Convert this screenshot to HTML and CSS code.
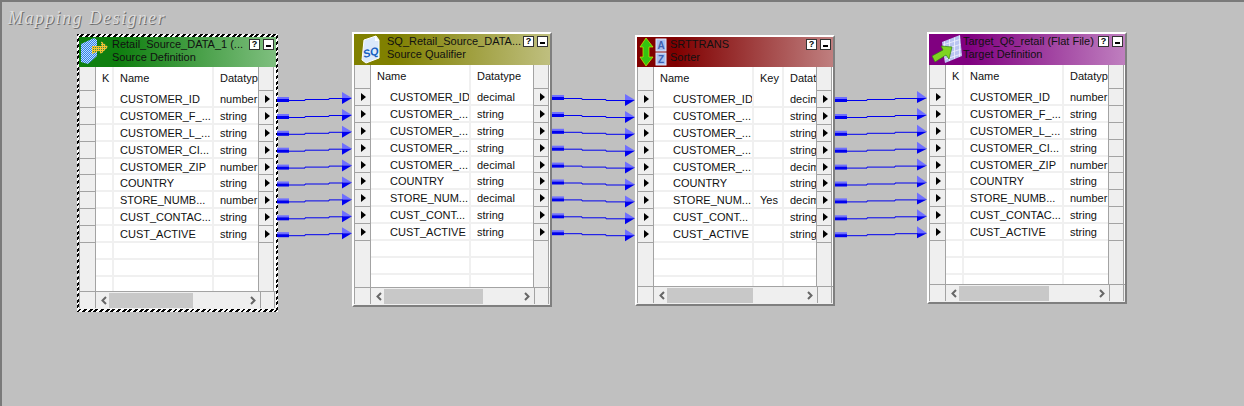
FILE: index.html
```html
<!DOCTYPE html>
<html lang="en">
<head>
    <meta charset="UTF-8">
    <title>Mapping Designer</title>
    <link rel="stylesheet" href="styles.css">
</head>
<body>
<div class="canvas">
    <div class="heading">Mapping Designer</div>

    <!-- Source definition -->
    <div class="win win-source">
        <div class="inner">
            <div class="title title-green">
                <svg class="icon" width="33" height="30" viewBox="0 0 33 30">
                    <defs>
                        <pattern id="blueCheck" width="2" height="2" patternUnits="userSpaceOnUse">
                            <rect width="2" height="2" fill="#2f7fe8"/>
                            <rect width="1" height="1" fill="#bfe0ff"/>
                            <rect x="1" y="1" width="1" height="1" fill="#bfe0ff"/>
                        </pattern>
                        <pattern id="yellowCheck" width="2" height="2" patternUnits="userSpaceOnUse">
                            <rect width="2" height="2" fill="#f4c430"/>
                            <rect width="1" height="1" fill="#3d8a4a"/>
                        </pattern>
                    </defs>
                    <polygon points="2,7 15,1 18,3 18,19 9,27 2,25" fill="url(#blueCheck)"/>
                    <polygon points="13,9 22,9 22,4 29,10 22,17 20,14 13,17" fill="url(#yellowCheck)"/>
                </svg>
                <div class="caption">
                    <div>Retail_Source_DATA_1 (...</div>
                    <div>Source Definition</div>
                </div>
                <div class="btns"><span class="btn">?</span><span class="btn btn-min"></span></div>
            </div>
            <div class="grid">
                <div class="row head"><div class="port"></div><div class="cell">K</div><div class="cell">Name</div><div class="cell">Datatype</div><div class="port"></div></div>
                <div class="row"><div class="port"></div><div class="cell"></div><div class="cell">CUSTOMER_ID</div><div class="cell">number</div><div class="port out"></div></div>
                <div class="row"><div class="port"></div><div class="cell"></div><div class="cell">CUSTOMER_F_...</div><div class="cell">string</div><div class="port out"></div></div>
                <div class="row"><div class="port"></div><div class="cell"></div><div class="cell">CUSTOMER_L_...</div><div class="cell">string</div><div class="port out"></div></div>
                <div class="row"><div class="port"></div><div class="cell"></div><div class="cell">CUSTOMER_CI...</div><div class="cell">string</div><div class="port out"></div></div>
                <div class="row"><div class="port"></div><div class="cell"></div><div class="cell">CUSTOMER_ZIP</div><div class="cell">number</div><div class="port out"></div></div>
                <div class="row"><div class="port"></div><div class="cell"></div><div class="cell">COUNTRY</div><div class="cell">string</div><div class="port out"></div></div>
                <div class="row"><div class="port"></div><div class="cell"></div><div class="cell">STORE_NUMB...</div><div class="cell">number</div><div class="port out"></div></div>
                <div class="row"><div class="port"></div><div class="cell"></div><div class="cell">CUST_CONTAC...</div><div class="cell">string</div><div class="port out"></div></div>
                <div class="row"><div class="port"></div><div class="cell"></div><div class="cell">CUST_ACTIVE</div><div class="cell">string</div><div class="port out"></div></div>
                <div class="row"><div class="port blank"></div><div class="cell"></div><div class="cell"></div><div class="cell"></div><div class="port blank"></div></div>
                <div class="row"><div class="port blank"></div><div class="cell"></div><div class="cell"></div><div class="cell"></div><div class="port blank"></div></div>
                <div class="row"><div class="port blank"></div><div class="cell"></div><div class="cell"></div><div class="cell"></div><div class="port blank"></div></div>
            </div>
            <div class="scroll">
                <div class="foot"></div>
                <div class="track"><svg class="chev" width="8" height="9" viewBox="0 0 8 9"><path d="M6 1 2.5 4.5 6 8" /></svg><div class="thumb"></div><svg class="chev chev-r" width="8" height="9" viewBox="0 0 8 9"><path d="M2 1 5.500 4.500 2 8" /></svg></div>
                <div class="foot"></div>
            </div>
        </div>
    </div>

    <!-- Source qualifier -->
    <div class="win win-qualifier">
        <div class="inner">
            <div class="title title-olive">
                <svg class="icon" width="33" height="31" viewBox="0 0 33 31">
                    <path d="M10 6 22 2 25 6V24L12 29 8 26Z" fill="#dbe9fb" stroke="#fff"/>
                    <path d="M21 2V7H25Z" fill="#fff"/>
                    <text x="10" y="24" class="icon-sq" transform="rotate(-14 10 24)">SQ</text>
                </svg>
                <div class="caption">
                    <div>SQ_Retail_Source_DATA...</div>
                    <div>Source Qualifier</div>
                </div>
                <div class="btns"><span class="btn">?</span><span class="btn btn-min"></span></div>
            </div>
            <div class="grid">
                <div class="row head"><div class="port"></div><div class="cell">Name</div><div class="cell">Datatype</div><div class="port"></div></div>
                <div class="row"><div class="port in"></div><div class="cell indent">CUSTOMER_ID</div><div class="cell">decimal</div><div class="port out"></div></div>
                <div class="row"><div class="port in"></div><div class="cell indent">CUSTOMER_...</div><div class="cell">string</div><div class="port out"></div></div>
                <div class="row"><div class="port in"></div><div class="cell indent">CUSTOMER_...</div><div class="cell">string</div><div class="port out"></div></div>
                <div class="row"><div class="port in"></div><div class="cell indent">CUSTOMER_...</div><div class="cell">string</div><div class="port out"></div></div>
                <div class="row"><div class="port in"></div><div class="cell indent">CUSTOMER_...</div><div class="cell">decimal</div><div class="port out"></div></div>
                <div class="row"><div class="port in"></div><div class="cell indent">COUNTRY</div><div class="cell">string</div><div class="port out"></div></div>
                <div class="row"><div class="port in"></div><div class="cell indent">STORE_NUM...</div><div class="cell">decimal</div><div class="port out"></div></div>
                <div class="row"><div class="port in"></div><div class="cell indent">CUST_CONT...</div><div class="cell">string</div><div class="port out"></div></div>
                <div class="row"><div class="port in"></div><div class="cell indent">CUST_ACTIVE</div><div class="cell">string</div><div class="port out"></div></div>
                <div class="row"><div class="port blank"></div><div class="cell"></div><div class="cell"></div><div class="port blank"></div></div>
                <div class="row"><div class="port blank"></div><div class="cell"></div><div class="cell"></div><div class="port blank"></div></div>
                <div class="row"><div class="port blank"></div><div class="cell"></div><div class="cell"></div><div class="port blank"></div></div>
            </div>
            <div class="scroll">
                <div class="foot"></div>
                <div class="track"><svg class="chev" width="8" height="9" viewBox="0 0 8 9"><path d="M6 1 2.5 4.5 6 8" /></svg><div class="thumb"></div><svg class="chev chev-r" width="8" height="9" viewBox="0 0 8 9"><path d="M2 1 5.500 4.500 2 8" /></svg></div>
                <div class="foot"></div>
            </div>
        </div>
    </div>

    <!-- Sorter -->
    <div class="win win-sorter">
        <div class="inner">
            <div class="title title-maroon">
                <svg class="icon" width="33" height="30" viewBox="0 0 33 30">
                    <path d="M9 1 16 10H12V20H16L9 29 3 20H6V10H3Z" fill="#35c410" stroke="#c8f000" stroke-width=".7"/>
                    <rect x="19" y="2" width="10" height="12" fill="#a9bff0" stroke="#e4ebff"/>
                    <rect x="19" y="16" width="10" height="12" fill="#a9bff0" stroke="#e4ebff"/>
                    <text x="24" y="12" class="icon-az">A</text>
                    <text x="24" y="26" class="icon-az">Z</text>
                </svg>
                <div class="caption">
                    <div>SRTTRANS</div>
                    <div>Sorter</div>
                </div>
                <div class="btns"><span class="btn">?</span><span class="btn btn-min"></span></div>
            </div>
            <div class="grid">
                <div class="row head"><div class="port"></div><div class="cell">Name</div><div class="cell">Key</div><div class="cell">Datatype</div><div class="port"></div></div>
                <div class="row"><div class="port in"></div><div class="cell indent">CUSTOMER_ID</div><div class="cell"></div><div class="cell">decimal</div><div class="port out"></div></div>
                <div class="row"><div class="port in"></div><div class="cell indent">CUSTOMER_...</div><div class="cell"></div><div class="cell">string</div><div class="port out"></div></div>
                <div class="row"><div class="port in"></div><div class="cell indent">CUSTOMER_...</div><div class="cell"></div><div class="cell">string</div><div class="port out"></div></div>
                <div class="row"><div class="port in"></div><div class="cell indent">CUSTOMER_...</div><div class="cell"></div><div class="cell">string</div><div class="port out"></div></div>
                <div class="row"><div class="port in"></div><div class="cell indent">CUSTOMER_...</div><div class="cell"></div><div class="cell">decimal</div><div class="port out"></div></div>
                <div class="row"><div class="port in"></div><div class="cell indent">COUNTRY</div><div class="cell"></div><div class="cell">string</div><div class="port out"></div></div>
                <div class="row"><div class="port in"></div><div class="cell indent">STORE_NUM...</div><div class="cell">Yes</div><div class="cell">decimal</div><div class="port out"></div></div>
                <div class="row"><div class="port in"></div><div class="cell indent">CUST_CONT...</div><div class="cell"></div><div class="cell">string</div><div class="port out"></div></div>
                <div class="row"><div class="port in"></div><div class="cell indent">CUST_ACTIVE</div><div class="cell"></div><div class="cell">string</div><div class="port out"></div></div>
                <div class="row"><div class="port blank"></div><div class="cell"></div><div class="cell"></div><div class="cell"></div><div class="port blank"></div></div>
                <div class="row"><div class="port blank"></div><div class="cell"></div><div class="cell"></div><div class="cell"></div><div class="port blank"></div></div>
                <div class="row"><div class="port blank"></div><div class="cell"></div><div class="cell"></div><div class="cell"></div><div class="port blank"></div></div>
            </div>
            <div class="scroll">
                <div class="foot"></div>
                <div class="track"><svg class="chev" width="8" height="9" viewBox="0 0 8 9"><path d="M6 1 2.5 4.5 6 8" /></svg><div class="thumb"></div><svg class="chev chev-r" width="8" height="9" viewBox="0 0 8 9"><path d="M2 1 5.500 4.500 2 8" /></svg></div>
                <div class="foot"></div>
            </div>
        </div>
    </div>

    <!-- Target definition -->
    <div class="win win-target">
        <div class="inner">
            <div class="title title-purple">
                <svg class="icon" width="34" height="31" viewBox="0 0 34 31">
                    <defs>
                        <pattern id="sheet" width="5" height="5" patternUnits="userSpaceOnUse" patternTransform="skewY(-18)">
                            <rect width="5" height="5" fill="#b9c4f2"/>
                            <path d="M0 0H5M0 0V5" stroke="#f2f4ff" stroke-width="1.400"/>
                        </pattern>
                    </defs>
                    <polygon points="13,8 31,1 33,22 16,29" fill="url(#sheet)"/>
                    <polygon points="3,22 14,16 12,12 23,13 20,25 17,21 6,28" fill="#7ed321" stroke="#2f7f10" stroke-width=".7"/>
                </svg>
                <div class="caption">
                    <div>Target_Q6_retail (Flat File)</div>
                    <div>Target Definition</div>
                </div>
                <div class="btns"><span class="btn">?</span><span class="btn btn-min"></span></div>
            </div>
            <div class="grid">
                <div class="row head"><div class="port"></div><div class="cell">K</div><div class="cell">Name</div><div class="cell">Datatype</div><div class="port"></div></div>
                <div class="row"><div class="port in"></div><div class="cell"></div><div class="cell">CUSTOMER_ID</div><div class="cell">number</div><div class="port"></div></div>
                <div class="row"><div class="port in"></div><div class="cell"></div><div class="cell">CUSTOMER_F_...</div><div class="cell">string</div><div class="port"></div></div>
                <div class="row"><div class="port in"></div><div class="cell"></div><div class="cell">CUSTOMER_L_...</div><div class="cell">string</div><div class="port"></div></div>
                <div class="row"><div class="port in"></div><div class="cell"></div><div class="cell">CUSTOMER_CI...</div><div class="cell">string</div><div class="port"></div></div>
                <div class="row"><div class="port in"></div><div class="cell"></div><div class="cell">CUSTOMER_ZIP</div><div class="cell">number</div><div class="port"></div></div>
                <div class="row"><div class="port in"></div><div class="cell"></div><div class="cell">COUNTRY</div><div class="cell">string</div><div class="port"></div></div>
                <div class="row"><div class="port in"></div><div class="cell"></div><div class="cell">STORE_NUMB...</div><div class="cell">number</div><div class="port"></div></div>
                <div class="row"><div class="port in"></div><div class="cell"></div><div class="cell">CUST_CONTAC...</div><div class="cell">string</div><div class="port"></div></div>
                <div class="row"><div class="port in"></div><div class="cell"></div><div class="cell">CUST_ACTIVE</div><div class="cell">string</div><div class="port"></div></div>
                <div class="row"><div class="port blank"></div><div class="cell"></div><div class="cell"></div><div class="cell"></div><div class="port blank"></div></div>
                <div class="row"><div class="port blank"></div><div class="cell"></div><div class="cell"></div><div class="cell"></div><div class="port blank"></div></div>
                <div class="row"><div class="port blank"></div><div class="cell"></div><div class="cell"></div><div class="cell"></div><div class="port blank"></div></div>
            </div>
            <div class="scroll">
                <div class="foot"></div>
                <div class="track"><svg class="chev" width="8" height="9" viewBox="0 0 8 9"><path d="M6 1 2.5 4.5 6 8" /></svg><div class="thumb"></div><svg class="chev chev-r" width="8" height="9" viewBox="0 0 8 9"><path d="M2 1 5.500 4.500 2 8" /></svg></div>
                <div class="foot"></div>
            </div>
        </div>
    </div>

    <!-- Links between the ports -->
    <svg class="links" width="1244" height="406" viewBox="0 0 1244 406">
        <defs>
            <g id="link1">
                <rect x="277" y="97" width="12" height="2" class="soft"/>
                <rect x="277" y="99" width="12" height="3" class="hard"/>
                <path d="M289 100.500H305V99.500H329V98.500H343" class="line"/>
                <polygon points="342,92 352,98 342,98" class="soft"/>
                <polygon points="342,98 352,98 342,104" class="hard"/>
            </g>
            <g id="link2">
                <rect x="552" y="95" width="12" height="2" class="soft"/>
                <rect x="552" y="97" width="12" height="3" class="hard"/>
                <path d="M564 98.500H582V99.500H606V100.500H626" class="line"/>
                <polygon points="625,94 635,100 625,100" class="soft"/>
                <polygon points="625,100 635,100 625,106" class="hard"/>
            </g>
            <g id="link3">
                <rect x="835" y="97" width="12" height="2" class="soft"/>
                <rect x="835" y="99" width="12" height="3" class="hard"/>
                <path d="M847 100.500H867V99.500H895V98.500H918" class="line"/>
                <polygon points="917,91 927,98 917,98" class="soft"/>
                <polygon points="917,98 927,98 917,103" class="hard"/>
            </g>
        </defs>
        <use href="#link1"/><use href="#link1" y="17"/><use href="#link1" y="33.800"/><use href="#link1" y="50.700"/><use href="#link1" y="67.600"/><use href="#link1" y="84.500"/><use href="#link1" y="101.400"/><use href="#link1" y="118.300"/><use href="#link1" y="135.200"/>
        <use href="#link2"/><use href="#link2" y="17"/><use href="#link2" y="33.800"/><use href="#link2" y="50.700"/><use href="#link2" y="67.600"/><use href="#link2" y="84.500"/><use href="#link2" y="101.400"/><use href="#link2" y="118.300"/><use href="#link2" y="135.200"/>
        <use href="#link3"/><use href="#link3" y="17"/><use href="#link3" y="33.800"/><use href="#link3" y="50.700"/><use href="#link3" y="67.600"/><use href="#link3" y="84.500"/><use href="#link3" y="101.400"/><use href="#link3" y="118.300"/><use href="#link3" y="135.200"/>
    </svg>
</div>
</body>
</html>
```

FILE: styles.css
```css
html, body { margin: 0; padding: 0; }
body { font-family: "Liberation Sans", Arial, sans-serif; font-size: 11px; color: #111; background: #c0c0c0; overflow: hidden; }

.canvas { position: relative; width: 1244px; height: 406px; box-sizing: border-box; border-top: 2px solid #7a7a7a; border-left: 2px solid #7a7a7a; background: #c0c0c0; overflow: hidden; }
.heading { position: absolute; left: 6px; top: 6px; font-family: "Liberation Serif", serif; font-style: italic; font-size: 18px; line-height: 20px; letter-spacing: 1.4px; color: #dcdcdc; text-shadow: 1px 1px 0 #6e6e6e; }

/* windows sit on a free canvas, so they are placed by coordinates */
.win { position: absolute; width: 200px; box-sizing: border-box; border: 2px solid; border-color: #fff #7f7f7f #7f7f7f #fff; }
.win-source { left: 75px; top: 32px; width: 201px; border: solid transparent; border-width: 3px 2px 3px 2px; background: repeating-linear-gradient(135deg, #000 0 2px, #fff 2px 4px); --cols: 17px 18px 100px 44px 16px; --body: 224px; --thumb: 84px; }
.win-qualifier { left: 350px; top: 30px; --cols: 17px 100px 62px 16px; --body: 222px; --thumb: 99px; }
.win-sorter { left: 633px; top: 33px; --cols: 17px 100px 30px 32px 16px; --body: 219px; --thumb: 86px; }
.win-target { left: 925px; top: 30px; --cols: 17px 18px 100px 44px 16px; --body: 219px; --thumb: 90px; }

.inner { background: #efefef; padding-bottom: 1px; }

.title { display: flex; height: 30px; box-sizing: border-box; }
.title-green { background: linear-gradient(90deg, #0f7f0f 20%, #7fbf7f); }
.title-olive { background: linear-gradient(90deg, #808000 20%, #bfbf7f); height: 31px; }
.title-maroon { background: linear-gradient(90deg, #800000 20%, #bf7f7f); }
.title-purple { background: linear-gradient(90deg, #800080 20%, #bf7fbf); height: 31px; }
.icon { flex: none; }
.icon-sq { font-family: "Liberation Sans", sans-serif; font-size: 11px; font-weight: bold; font-style: italic; fill: #1560c0; }
.icon-az { font-family: "Liberation Sans", sans-serif; font-size: 10px; font-weight: bold; fill: #3f5fb0; text-anchor: middle; }
.caption { flex: 1; min-width: 0; padding-top: 1px; line-height: 13px; white-space: nowrap; overflow: hidden; }
.btns { flex: none; display: flex; gap: 3px; padding: 2px 2px 0 0; align-self: flex-start; }
.btn { display: block; position: relative; width: 11px; height: 11px; box-sizing: border-box; border: 1px solid #333; background: #fff; font-size: 9px; font-weight: bold; line-height: 9px; text-align: center; color: #000; }
.btn-min::after { content: ""; position: absolute; left: 2px; top: 5px; width: 5px; height: 2px; background: #000; }

.grid { height: var(--body); overflow: hidden; background: #fff; }
.row { display: grid; grid-template-columns: var(--cols); height: 16.900px; background: #fff; }
.head { height: 24px; }
.cell { box-sizing: border-box; padding-left: 6px; line-height: 16px; white-space: nowrap; overflow: hidden; border-right: 2px solid #f0f0f0; border-bottom: 2px solid #f0f0f0; }
.cell:nth-last-child(2) { border-right: 0; }
.head .cell { line-height: 22px; border-bottom: 0; }
.indent { padding-left: 19px; }

.port { position: relative; box-sizing: border-box; background: #efefef; border: solid #a3a3a3; border-width: 0 1px 1px 1px; }
.blank { border-bottom: 0; }
.in::after, .out::after { content: ""; position: absolute; left: 6px; top: 4px; border-left: 5px solid #000; border-top: 4px solid transparent; border-bottom: 4px solid transparent; }

.scroll { display: grid; grid-template-columns: 17px 1fr 16px; height: 16px; border-top: 1px solid #a3a3a3; }
.foot { background: #efefef; }
.foot:first-child { border-left: 1px solid #a3a3a3; border-right: 1px solid #a3a3a3; }
.foot:last-child { border-left: 1px solid #a3a3a3; border-right: 1px solid #a3a3a3; margin-right: 1px; }
.track { display: flex; align-items: center; background: #efefef; padding-right: 3px; }
.thumb { width: var(--thumb); height: 15px; margin-left: 1px; background: #c8c8c8; }
.chev { flex: none; margin-left: 4px; }
.chev-r { margin-left: auto; }
.chev path { fill: none; stroke: #666; stroke-width: 2; }

.links { position: absolute; left: -2px; top: -2px; pointer-events: none; }
.soft { fill: #6f6fff; }
.hard { fill: #0000f0; }
.line { fill: none; stroke: #0000f0; stroke-width: 1; }
```
